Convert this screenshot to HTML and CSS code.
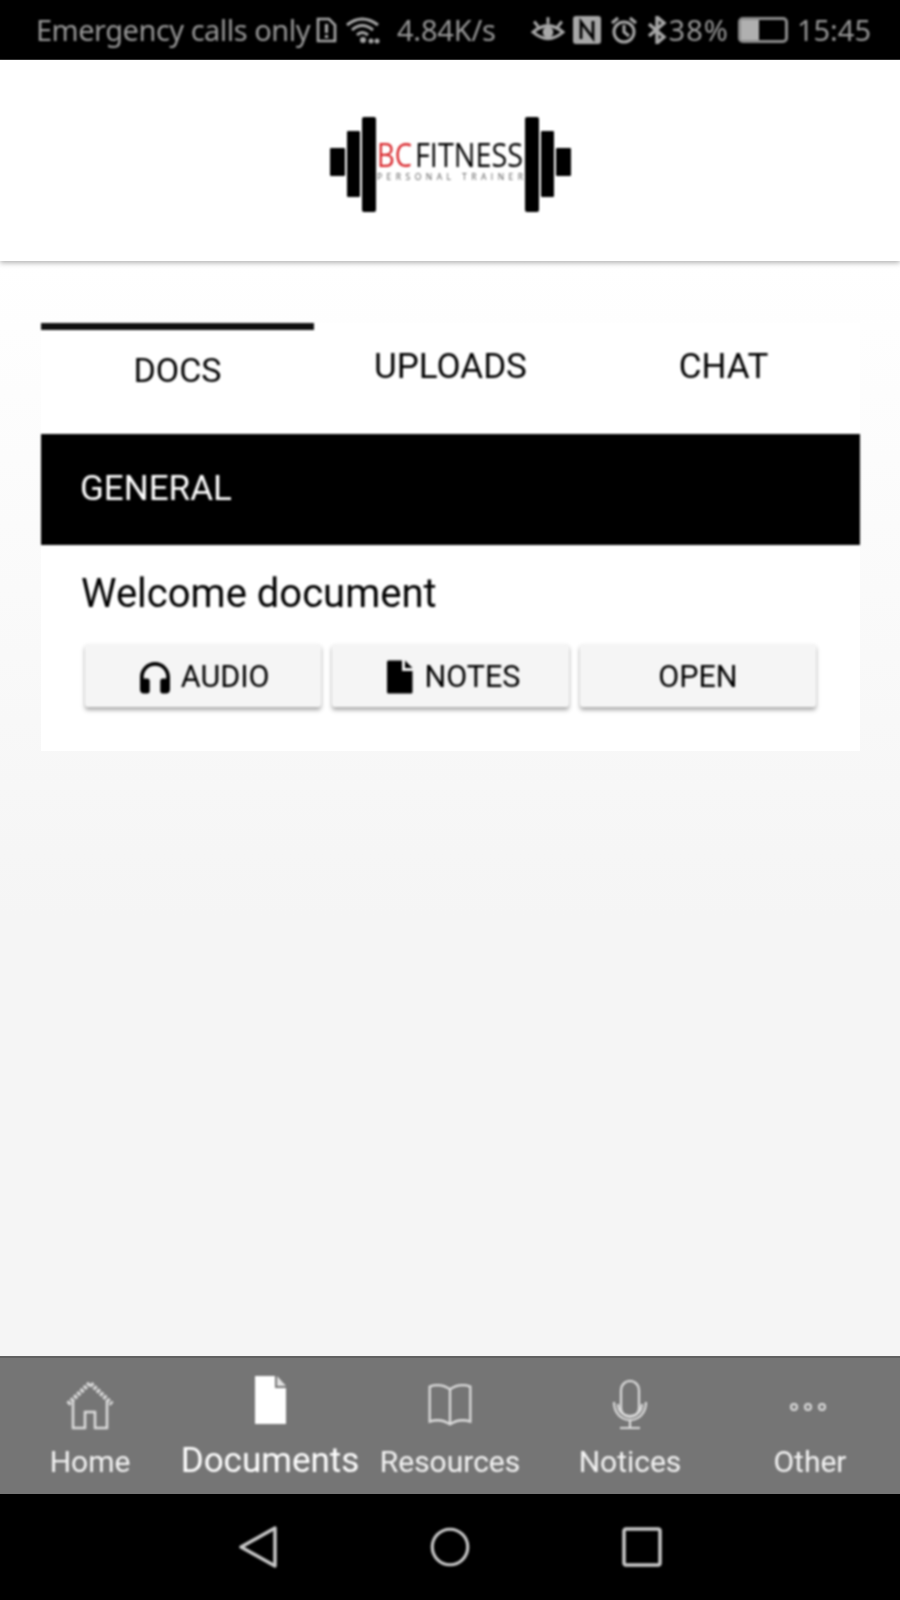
FILE: index.html
```html
<!DOCTYPE html>
<html lang="en">
<head>
    <meta charset="UTF-8">
    <meta name="viewport" content="width=device-width, initial-scale=1.0">
    <title>BC Fitness</title>
    <link rel="stylesheet" href="styles.css">
</head>
<body>
    <div class="status-bar">
        <div class="status-left">
            <span class="carrier">Emergency calls only</span>
            <svg class="sb-sim" viewBox="0 0 22 26"><path d="M3 2h11l6 6v16H3z" fill="none" stroke="#a8a8a8" stroke-width="2.6"/><path d="M11.5 7v9M11.5 18v3" stroke="#a8a8a8" stroke-width="3.2"/></svg>
            <svg class="sb-wifi" viewBox="0 0 36 28"><g fill="none" stroke="#a8a8a8" stroke-width="3"><path d="M2 9Q17-3 33 9"/><path d="M7 14Q17 5 28 14"/><path d="M12 19Q17 14 23 19"/></g><circle cx="18" cy="24" r="3" fill="#a8a8a8"/><circle cx="26" cy="25" r="2.500" fill="#a8a8a8"/><circle cx="32" cy="25" r="2.500" fill="#a8a8a8"/></svg>
            <span class="speed">4.84K/s</span>
        </div>
        <div class="status-right">
            <svg class="sb-eye" viewBox="0 0 32 26"><path d="M2 15Q16 3 30 15Q16 27 2 15Z" fill="none" stroke="#a8a8a8" stroke-width="3"/><circle cx="16" cy="15" r="5" fill="#a8a8a8"/><path d="M3 5l4 5M16 1v6M29 5l-4 5" stroke="#a8a8a8" stroke-width="2.800"/></svg>
            <svg class="sb-nfc" viewBox="0 0 28 28"><rect width="28" height="28" rx="3" fill="#a8a8a8"/><path d="M8 23V6l12 16V5" fill="none" stroke="#000" stroke-width="2.800"/></svg>
            <svg class="sb-alarm" viewBox="0 0 28 28"><circle cx="14" cy="16" r="10" fill="none" stroke="#a8a8a8" stroke-width="3"/><path d="M14 9v7l5 4M2 7l6-5M26 7l-6-5" fill="none" stroke="#a8a8a8" stroke-width="3"/></svg>
            <svg class="sb-bt" viewBox="0 0 20 28"><path d="M2 8l15 13-7 6V1l7 6L2 20" fill="none" stroke="#a8a8a8" stroke-width="3.400"/></svg>
            <span class="batt-pct">38%</span>
            <span class="battery"><span class="battery-level"></span></span>
            <span class="clock">15:45</span>
        </div>
    </div>

    <header class="app-header">
        <svg class="logo" width="241" height="96" viewBox="0 0 241 96">
            <rect x="0" y="31" width="15" height="28" rx="1"/>
            <rect x="17" y="14" width="13" height="66" rx="1"/>
            <rect x="32" y="0" width="14" height="95" rx="2"/>
            <rect x="195" y="0" width="14" height="95" rx="2"/>
            <rect x="211" y="14" width="13" height="66" rx="1"/>
            <rect x="226" y="31" width="15" height="28" rx="1"/>
            <text class="logo-bc" x="47" y="50" textLength="35" lengthAdjust="spacingAndGlyphs">BC</text>
            <text class="logo-fit" x="85" y="50" textLength="108" lengthAdjust="spacingAndGlyphs">FITNESS</text>
            <text class="logo-sub" x="47" y="63" textLength="146">PERSONAL TRAINER</text>
        </svg>
    </header>

    <main class="content">
        <nav class="tabs">
            <div class="tab active">DOCS</div>
            <div class="tab">UPLOADS</div>
            <div class="tab">CHAT</div>
        </nav>
        <section class="card">
            <h2 class="card-head">GENERAL</h2>
            <div class="doc">
                <p class="doc-title">Welcome document</p>
                <div class="doc-actions">
                    <button class="btn">
                        <svg class="btn-icon" viewBox="0 0 24 24"><path d="M12 2C6.5 2 2 6.5 2 12v8.5C2 21.9 3.1 23 4.5 23H7c.8 0 1.500-.7 1.500-1.500v-7C8.500 13.700 7.800 13 7 13H4.500v-1a7.500 7.500 0 0 1 15 0v1H17c-.8 0-1.500.7-1.500 1.500v7c0 .8.7 1.500 1.500 1.500h2.500c1.400 0 2.500-1.100 2.500-2.500V12c0-5.500-4.500-10-10-10z"/></svg>
                        AUDIO
                    </button>
                    <button class="btn">
                        <svg class="btn-icon" viewBox="0 0 24 24"><path d="M5 1h9v7h7v14a1 1 0 0 1-1 1H5a1 1 0 0 1-1-1V2a1 1 0 0 1 1-1zM16 1l5 5h-5z"/></svg>
                        NOTES
                    </button>
                    <button class="btn">OPEN</button>
                </div>
            </div>
        </section>
    </main>

    <nav class="bottom-tabs">
        <div class="bt-item">
            <svg class="bt-icon" viewBox="0 0 48 50" fill="none" stroke="#dcdcdc" stroke-width="2.500"><path d="M2 24L24 3l22 21" stroke-width="4.500" stroke-dasharray="3 1.500"/><path d="M7 20v28h12V32h10v16h12V20"/></svg>
            <span>Home</span>
        </div>
        <div class="bt-item current">
            <svg class="bt-icon" viewBox="0 0 48 50"><path d="M9 0h20v12h11v36H9z" fill="#fff"/><path d="M31 0l9 10h-9z" fill="#e0e0e0"/></svg>
            <span>Documents</span>
        </div>
        <div class="bt-item">
            <svg class="bt-icon" viewBox="0 0 52 50" fill="none" stroke="#dcdcdc" stroke-width="2.500"><path d="M26 8Q16 1 4 5v38q12-4 22 3 10-7 22-3V5Q36 1 26 8zM26 8v38"/></svg>
            <span>Resources</span>
        </div>
        <div class="bt-item">
            <svg class="bt-icon" viewBox="0 0 48 50" fill="none" stroke="#dcdcdc" stroke-width="2.200"><rect x="15" y="1" width="18" height="36" rx="9"/><path d="M8 22c0 24 32 24 32 0M12 24c0 16 24 16 24 0M24 39v9M14 48h20"/></svg>
            <span>Notices</span>
        </div>
        <div class="bt-item">
            <svg class="bt-icon" viewBox="0 0 48 50" fill="none" stroke="#dcdcdc" stroke-width="2"><circle cx="8" cy="27" r="3"/><circle cx="22" cy="27" r="3"/><circle cx="36" cy="27" r="3"/></svg>
            <span>Other</span>
        </div>
    </nav>

    <footer class="nav-bar">
        <svg class="nav-icon" viewBox="0 0 40 44"><path d="M3 22L37 3v38z"/></svg>
        <svg class="nav-icon" viewBox="0 0 44 44"><circle cx="22" cy="22" r="19.500"/></svg>
        <svg class="nav-icon" viewBox="0 0 40 40"><rect x="2" y="2" width="36" height="36" rx="2"/></svg>
    </footer>
</body>
</html>
```
FILE: styles.css
```css
* {
    box-sizing: border-box;
}
html, body {
    margin: 0;
    height: 100%;
}
body {
    display: flex;
    flex-direction: column;
    width: 900px;
    height: 1600px;
    overflow: hidden;
    font-family: Roboto, "Liberation Sans", sans-serif;
    color: #000;
    background: #fff;
}

/* the source image is soft, so its contents are too */
.status-left, .status-right, .logo, .tab, .card-head, .doc, .bt-item, .nav-icon {
    filter: blur(0.8px);
}

/* status bar */
.status-bar {
    height: 60px;
    flex: none;
    background: #000;
    color: #989898;
    display: flex;
    justify-content: space-between;
    align-items: center;
    padding: 0 29px 0 36px;
    font-family: "Noto Sans", sans-serif;
    font-size: 29px;
    border-bottom: 1px solid #333;
}
.status-left, .status-right {
    display: flex;
    align-items: center;
}
.carrier {
    letter-spacing: -0.5px;
}
.sb-sim {
    width: 22px;
    height: 26px;
    margin-left: 5px;
}
.sb-wifi {
    width: 36px;
    height: 28px;
    margin-left: 8px;
}
.speed {
    margin-left: 16px;
    letter-spacing: -0.2px;
}
.sb-eye {
    width: 34px;
    height: 28px;
}
.sb-nfc {
    width: 28px;
    height: 28px;
    margin-left: 8px;
}
.sb-alarm {
    width: 28px;
    height: 28px;
    margin-left: 9px;
}
.sb-bt {
    width: 20px;
    height: 28px;
    margin-left: 9px;
}
.batt-pct {
    margin-left: 2px;
    letter-spacing: 1px;
}
.battery {
    width: 50px;
    height: 26px;
    margin-left: 9px;
    border: 3px solid #8c8c8c;
    border-radius: 5px;
    display: block;
}
.battery-level {
    display: block;
    width: 18px;
    height: 100%;
    background: #b0b0b0;
}
.clock {
    margin-left: 9px;
}

/* header */
.app-header {
    height: 201px;
    flex: none;
    background: #fff;
    display: flex;
    justify-content: center;
    padding-top: 57px;
    box-shadow: 0 2px 5px rgba(0, 0, 0, 0.3);
    z-index: 1;
}
.logo-bc, .logo-fit {
    font-family: "Open Sans", sans-serif;
    font-size: 33px;
}
.logo-bc {
    fill: #d9262b;
}
.logo-fit {
    fill: #000;
}
.logo-sub {
    font-family: "Open Sans", sans-serif;
    font-size: 8.500px;
    fill: #555;
}

/* main area */
.content {
    flex: 1;
    padding: 62px 40px 0 41px;
    background: linear-gradient(#fff, #f5f5f5 60%);
}
.tabs {
    display: flex;
    background: #fff;
    height: 111px;
}
.tab {
    flex: 1;
    text-align: center;
    font-size: 35px;
    line-height: 36px;
    padding-top: 26px;
    color: #000;
}
.tab.active {
    border-top: 7px solid #111;
    padding-top: 22px;
    font-size: 34px;
}
.card {
    background: #fff;
    height: 317px;
}
.card-head {
    margin: 0;
    height: 111px;
    background: #000;
    color: #fff;
    font-size: 35px;
    font-weight: 400;
    line-height: 110px;
    padding-left: 39px;
}
.doc {
    padding: 28px 44px 0;
}
.doc-title {
    margin: 0 0 29px -4px;
    font-size: 40px;
    line-height: 42px;
    color: #000;
}
.doc-actions {
    display: flex;
    gap: 11px;
}
.btn {
    flex: 1;
    height: 63px;
    border: 0;
    padding: 2px 0 0;
    border-radius: 3px;
    background: #f5f5f5;
    color: #000;
    font-family: inherit;
    font-size: 30.500px;
    display: flex;
    align-items: center;
    justify-content: center;
    gap: 8px;
    box-shadow: 0 3px 4px rgba(0, 0, 0, 0.35);
}
.btn-icon {
    width: 36px;
    height: 36px;
    fill: #000;
}

/* bottom tabs */
.bottom-tabs {
    height: 138px;
    flex: none;
    background: #757575;
    border-top: 2px solid #606060;
    display: flex;
    z-index: 1;
}
.bt-item {
    flex: 1;
    display: flex;
    flex-direction: column;
    align-items: center;
    color: #f4f4f4;
    font-size: 30px;
    padding-top: 22px;
    white-space: nowrap;
}
.bt-icon {
    width: 48px;
    height: 50px;
    margin-bottom: 14px;
}
.bt-item.current {
    font-size: 35px;
    color: #fff;
    padding-top: 18px;
}

/* android nav */
.nav-bar {
    height: 106px;
    flex: none;
    background: #000;
    display: flex;
    justify-content: center;
    align-items: center;
    gap: 152px;
}
.nav-icon {
    width: 40px;
    height: 44px;
    fill: none;
    stroke: #c8c8c8;
    stroke-width: 3.500;
    stroke-linejoin: round;
}
```
